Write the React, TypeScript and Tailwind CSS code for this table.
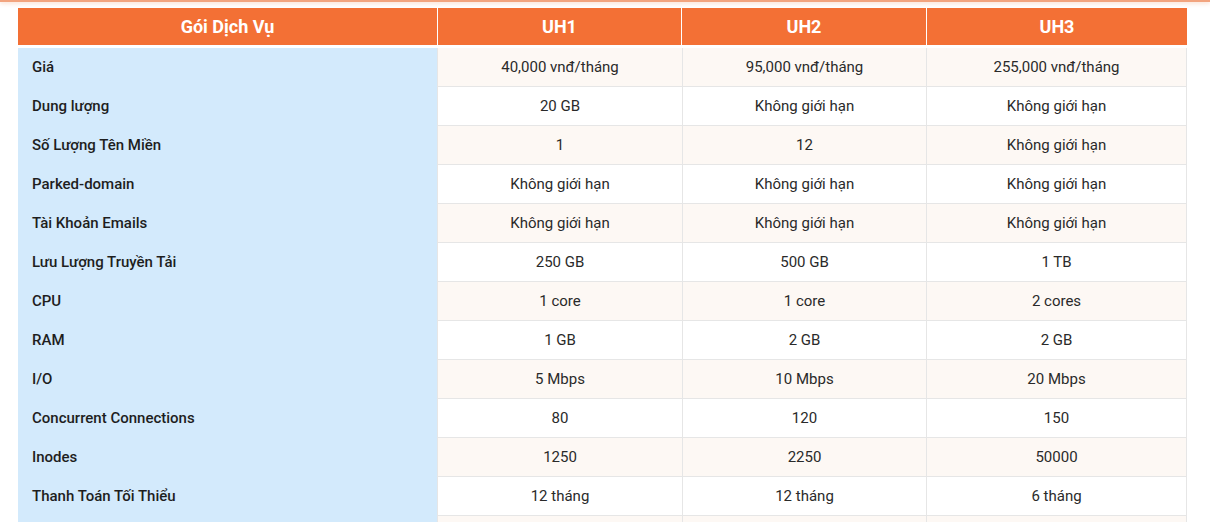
import React from "react";

const rows: [string, string, string, string][] = [
  ["Giá", "40,000 vnđ/tháng", "95,000 vnđ/tháng", "255,000 vnđ/tháng"],
  ["Dung lượng", "20 GB", "Không giới hạn", "Không giới hạn"],
  ["Số Lượng Tên Miền", "1", "12", "Không giới hạn"],
  ["Parked-domain", "Không giới hạn", "Không giới hạn", "Không giới hạn"],
  ["Tài Khoản Emails", "Không giới hạn", "Không giới hạn", "Không giới hạn"],
  ["Lưu Lượng Truyền Tải", "250 GB", "500 GB", "1 TB"],
  ["CPU", "1 core", "1 core", "2 cores"],
  ["RAM", "1 GB", "2 GB", "2 GB"],
  ["I/O", "5 Mbps", "10 Mbps", "20 Mbps"],
  ["Concurrent Connections", "80", "120", "150"],
  ["Inodes", "1250", "2250", "50000"],
  ["Thanh Toán Tối Thiểu", "12 tháng", "12 tháng", "6 tháng"],
  ["", "", "", ""],
];

export default function App() {
  return (
    <div className="w-[1210px] h-[522px] overflow-hidden bg-white font-['Roboto',sans-serif]">
      <div className="h-[2px] bg-[#f2a47f] shadow-[0_1px_4px_rgba(240,140,90,0.45)]" />
      <div className="pt-[6px] pl-[18px]">
        <div className="grid grid-cols-[420px_244px_245px_260px] w-[1169px] h-[37px] bg-[#f37035] text-white font-bold text-[18px]">
          <div className="flex items-center justify-center border-r border-white">Gói Dịch Vụ</div>
          <div className="flex items-center justify-center border-r border-white">UH1</div>
          <div className="flex items-center justify-center border-r border-white">UH2</div>
          <div className="flex items-center justify-center">UH3</div>
        </div>
        <div className="h-[3px]" />
        <div className="w-[1169px]">
          {rows.map((r, i) => {
            const bg = i % 2 === 0 ? "bg-[#fdf8f4]" : "bg-white";
            return (
              <div key={i} className="grid grid-cols-[419px_245px_244px_261px] h-[39px]">
                <div className="flex items-center pl-[14px] pb-[1px] bg-[#d3eafc] text-[15px] font-medium text-[#1e1e1e]">
                  {r[0]}
                </div>
                <div className={`flex items-center justify-center pt-[1px] border-l border-b border-[#e6e6e6] ${bg} text-[15px] text-[#2a2a2a]`}>
                  {r[1]}
                </div>
                <div className={`flex items-center justify-center pt-[1px] border-l border-b border-[#e6e6e6] ${bg} text-[15px] text-[#2a2a2a]`}>
                  {r[2]}
                </div>
                <div className={`flex items-center justify-center pt-[1px] border-l border-r border-b border-[#e6e6e6] ${bg} text-[15px] text-[#2a2a2a]`}>
                  {r[3]}
                </div>
              </div>
            );
          })}
        </div>
      </div>
    </div>
  );
}
